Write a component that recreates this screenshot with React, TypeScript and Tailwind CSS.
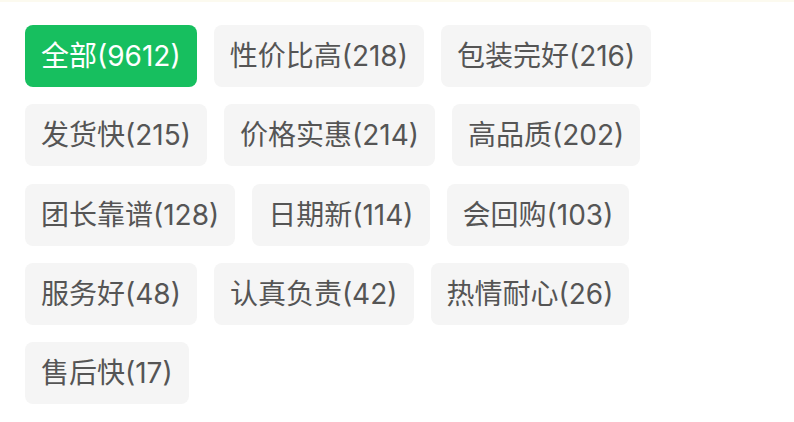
const tags = [
  { label: "全部", count: 9612, active: true },
  { label: "性价比高", count: 218 },
  { label: "包装完好", count: 216 },
  { label: "发货快", count: 215 },
  { label: "价格实惠", count: 214 },
  { label: "高品质", count: 202 },
  { label: "团长靠谱", count: 128 },
  { label: "日期新", count: 114 },
  { label: "会回购", count: 103 },
  { label: "服务好", count: 48 },
  { label: "认真负责", count: 42 },
  { label: "热情耐心", count: 26 },
  { label: "售后快", count: 17 },
];

export default function App() {
  return (
    <div className="w-[794px] h-[422px] bg-white overflow-hidden" style={{ fontFamily: 'Inter, "Noto Sans CJK SC", sans-serif' }}>
      <div className="h-[2px] bg-[#fcfaef]" />
      <div className="flex flex-wrap gap-x-[17px] gap-y-[17.3px] pt-[23px] pl-[25px] pr-[25px]">
        {tags.map((t) => (
          <div
            key={t.label}
            className={
              t.active
                ? "h-[62px] px-4 flex items-center rounded-lg text-[28px] leading-none bg-[#17bf5f] text-white"
                : "h-[62px] px-4 flex items-center rounded-lg text-[28px] leading-none bg-[#f5f5f5] text-[#555555]"
            }
          >
            {t.label}({t.count})
          </div>
        ))}
      </div>
    </div>
  );
}
